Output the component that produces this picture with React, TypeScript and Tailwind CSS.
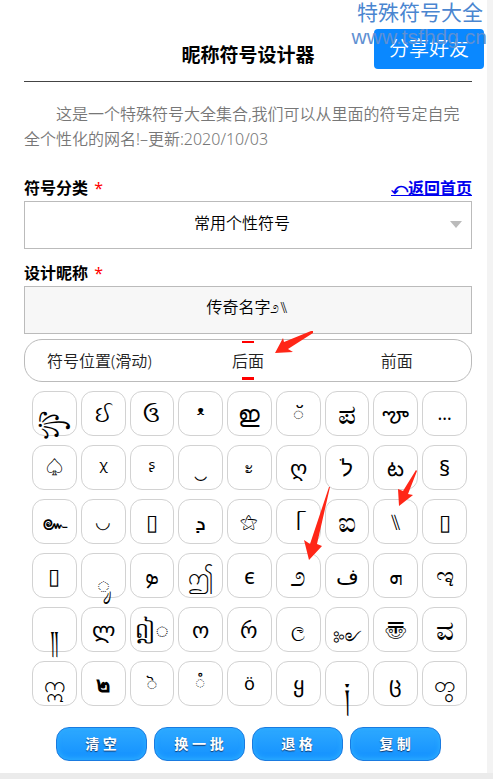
import { useState } from 'react'
import clsx from 'clsx'

const SIMBOLOS = [
  '꧂', 'ઈ', 'ઉ', 'ᵜ', 'ഇ', '◌ॅ', 'ಪ', 'ౡ', '…',
  '♤', 'ᵡ', 'ᶳ', '‿', 'ะ', 'ღ', 'לֹ', 'ట', '§',
  '๛', '◡', '▯', 'ܕ', '⚝', 'ᥬ', 'ಐ', '⑊', '▯',
  '▯', '◌ᬸ', 'ܤ', 'ဤ', 'ϵ', '೨', 'ف', 'ܗ', 'ಇ',
  '༎', 'ლ', 'ឦ◌', 'ო', 'რ', 'ල', '༻', '〠', 'ವ',
  'ဣ', '๒', '◌ॆ', '◌ំ', 'ӧ', 'ყ', '༏', 'ც', 'တွ',
]

// estos alfabetos se dibujan más pequeños que el resto
const GRANDES = ['ಪ', 'ಐ', '೨', 'ಇ', 'ವ', '༏']
const PEQUENOS = ['◌ॅ', '◌ॆ', '◌ំ', 'ะ', '◡', '♤', '⚝', 'ӧ', '…', '༻', 'ල']
const NEGRITAS = ['๒']
// adornos que cuelgan por debajo de la línea
const BAJOS = ['꧂', '༎', '༏', '༻', '◌ᬸ']

const POSICIONES = ['后面', '前面']
const ACCIONES = ['清 空', '换 一 批', '退 格', '复 制']

export default function App() {
  const [nombre, setNombre] = useState('传奇名字೨⑊')
  const [posicion, setPosicion] = useState('后面')

  function agregar(s: string) {
    setNombre((prev) => (posicion === '后面' ? prev + s : s + prev))
  }

  function ejecutar(accion: string) {
    if (accion === '清 空') setNombre('')
    if (accion === '退 格') setNombre((prev) => Array.from(prev).slice(0, -1).join(''))
  }

  return (
    <div className="bg-[#ebebeb] pb-[6px] font-['Noto_Sans','Noto_Sans_CJK_SC',sans-serif] text-base text-black">
      <div className="bg-[#f3f3f3] pr-[6px]">
        <main className="relative bg-white pr-[15px] pb-3 pl-6">

          {/* Cabecera */}
          <header className="border-b border-[#444] pt-[41px] pb-3">
            <h1 className="text-center text-[19px] leading-7 font-bold">昵称符号设计器</h1>
          </header>
          <button type="button" className="absolute top-[29px] right-[3px] h-10 w-[110px] rounded bg-[#0a88ff] text-xl leading-10 font-[350] text-white">
            分享好友
          </button>
          <div className="pointer-events-none absolute top-0 right-0 text-right">
            <div className="pr-1 text-[21px] leading-[25px] text-[#4a86d0]">特殊符号大全</div>
            <div className="font-['Liberation_Sans',sans-serif] text-[21px] leading-6 text-[#5f90d2]">www.tsfhdg.cn</div>
          </div>

          <p className="pt-5 indent-8 leading-[25px] font-[350] text-[#777]">
            这是一个特殊符号大全集合,我们可以从里面的符号定自完全个性化的网名!–更新:2020/10/03
          </p>

          {/* Categoría */}
          <div className="flex items-center justify-between pt-6 leading-[25px] font-bold">
            <label htmlFor="categoria">符号分类 <span className="ml-0.5 font-normal text-[#f00]">*</span></label>
            <a href="#inicio" className="text-[#0000ee] underline">⤺返回首页</a>
          </div>
          <div className="relative">
            <select id="categoria" className="block h-12 w-full appearance-none border border-[#bbb] bg-white pr-3 pb-1 text-center font-[350] [text-align-last:center]">
              <option>常用个性符号</option>
            </select>
            <svg className="pointer-events-none absolute top-5 right-[10px] h-[7px] w-3" viewBox="0 0 12 7">
              <path d="M0 0h12L6 7z" fill="#bbb" />
            </svg>
          </div>

          {/* Apodo */}
          <label htmlFor="apodo" className="block pt-3 leading-[25px] font-bold">
            设计昵称 <span className="ml-0.5 font-normal text-[#f00]">*</span>
          </label>
          <input
            id="apodo"
            value={nombre}
            onChange={(e) => setNombre(e.target.value)}
            className="block h-12 w-full border border-[#bbb] bg-[#f7f7f7] pb-2 text-center font-[350]"
          />

          {/* Posición */}
          <fieldset className="mt-[5px] grid h-[43px] grid-cols-3 items-center rounded-[18px] border border-[#bbb] text-center font-[350] text-[#222]">
            <span>符号位置(滑动)</span>
            {POSICIONES.map((p) => (
              <label key={p} className="relative flex h-full items-center justify-center">
                <input
                  type="radio"
                  name="posicion"
                  className="peer sr-only"
                  checked={posicion === p}
                  onChange={() => setPosicion(p)}
                />
                <span>{p}</span>
                <span className="absolute inset-y-px left-1/2 hidden w-3 -translate-x-1/2 border-t-2 border-b-3 border-[#f00] peer-checked:block" />
              </label>
            ))}
          </fieldset>

          {/* Símbolos */}
          <div className="mt-[9px] mr-[5px] ml-2 grid grid-cols-9 gap-x-1 gap-y-[9px]">
            {SIMBOLOS.map((s, i) => (
              <button
                key={i}
                type="button"
                onClick={() => agregar(s)}
                className={clsx(
                  'h-[45px] rounded-xl border border-[#d2d2d2] whitespace-nowrap',
                  GRANDES.includes(s) ? 'text-[28px]' : PEQUENOS.includes(s) ? 'text-lg' : 'text-[22px]',
                  BAJOS.includes(s) ? 'leading-[61px]' : 'leading-[43px]',
                  NEGRITAS.includes(s) && 'font-bold',
                )}
              >
                {s}
              </button>
            ))}
          </div>

          {/* Acciones */}
          <div className="mt-[21px] flex justify-center gap-[7px]">
            {ACCIONES.map((a) => (
              <button
                key={a}
                type="button"
                onClick={() => ejecutar(a)}
                className="h-[34px] w-[91px] rounded-[13px] border border-[#1a7be0] bg-linear-to-b from-[#2da9ff] to-[#1290ff] text-sm font-bold text-white shadow-[inset_0_-2px_5px_rgba(50,180,255,0.8)] text-shadow-[0_1px_1px_#123a70]"
              >
                {a}
              </button>
            ))}
          </div>

          {/* Flechas */}
          <svg className="pointer-events-none absolute top-[330px] left-[274px] h-6 w-10" viewBox="0 0 40 24" fill="#ff2617">
            <path d="M39 1L37 1L10 12L9 8L1 23L19 22L14 19L39 3z" />
          </svg>
          <svg className="pointer-events-none absolute top-[469px] left-[396px] h-[38px] w-6" viewBox="0 0 24 38" fill="#ff2617">
            <path d="M20 1L7 22L2 20L3 37L17 26L12 25L21 2z" />
          </svg>
          <svg className="pointer-events-none absolute top-[486px] left-[303px] h-[74px] w-7" viewBox="0 0 28 74" fill="#ff2617">
            <path d="M26 1L27 1L14 58L19 60L6 74L1 54L7 58z" />
          </svg>
        </main>
      </div>
    </div>
  )
}
